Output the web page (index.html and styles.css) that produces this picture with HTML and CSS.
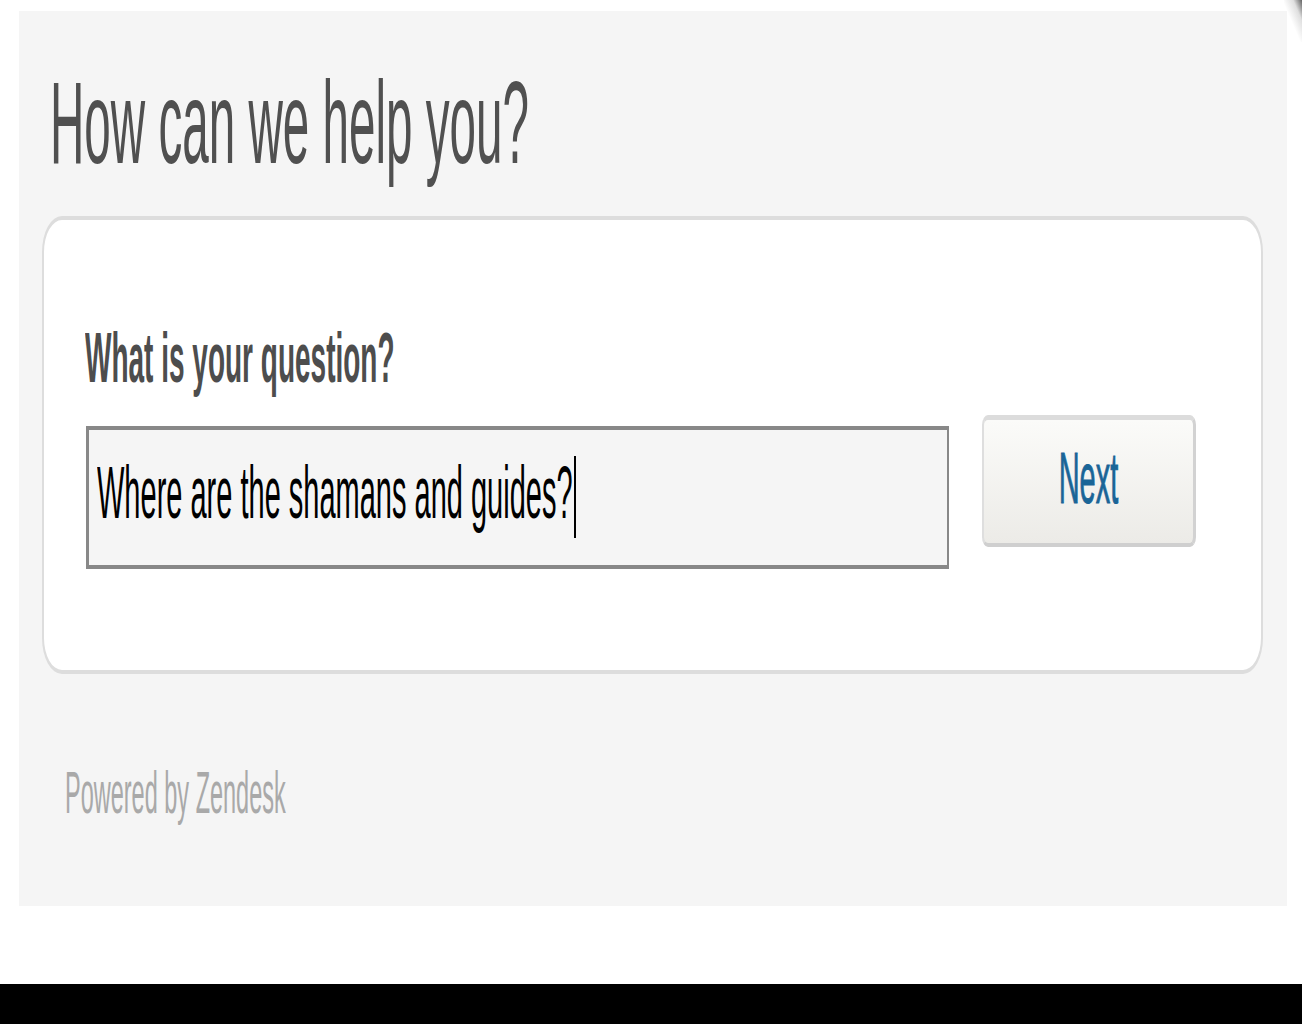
FILE: index.html
```html
<!DOCTYPE html>
<html lang="en">
<head>
    <meta charset="UTF-8" />
    <title>How can we help you?</title>
    <link rel="stylesheet" href="styles.css">
</head>
<body>
    <div class="corner-shadow"></div>
    <div class="panel">
        <h1 class="title"><span class="tall">How can we help you?</span></h1>
        <div class="card">
            <label class="question-label" for="question"><span class="tall">What is your question?</span></label>
            <div class="question-row">
                <div class="field" id="question">
                    <span class="tall field-text">Where are the shamans and guides?</span>
                    <span class="caret"></span>
                </div>
                <button class="next-btn"><span class="tall">Next</span></button>
            </div>
        </div>
        <div class="powered"><span class="tall">Powered by Zendesk</span></div>
    </div>
    <div class="bottom-bar"></div>
</body>
</html>
```

FILE: styles.css
```css
body {
    font-family: "Liberation Sans", Arial, sans-serif;
    margin: 0;
    padding: 0;
    background: #fff;
    width: 1302px;
    height: 1024px;
    overflow: hidden;
    position: relative;
}

/* text in this shot is stretched tall, so every label is scaled */
.tall {
    display: inline-block;
    white-space: nowrap;
    transform: scaleY(2.5);
    transform-origin: 0 0;
}

.corner-shadow {
    position: absolute;
    top: 0;
    right: 0;
    width: 18px;
    height: 42px;
    background: linear-gradient(to bottom left, rgba(60, 60, 60, 0.8) 0%, rgba(150, 150, 150, 0.3) 25%, rgba(255, 255, 255, 0) 55%);
    border-bottom-left-radius: 18px 42px;
}

.panel {
    box-sizing: border-box;
    width: 1268px;
    height: 895px;
    margin: 11px 0 0 19px;
    padding: 53px 24px 0 23px;
    background: #f5f5f5;
}

.title {
    margin: 0 0 32px 8px;
    height: 120px;
    font-weight: normal;
    color: #505050;
}

    .title .tall {
        font-size: 47.6px;
        line-height: 48px;
        transform: scaleY(2.47);
    }

.card {
    background: #fff;
    border-style: solid;
    border-color: #dddddd;
    border-width: 4px 2px 4px 2px;
    border-radius: 20px / 36px;
    padding: 102px 65px 101px 42px;
}

.question-label {
    display: block;
    height: 75px;
    margin: 0 0 18px -1px;
    color: #4d4d4d;
    font-weight: bold;
}

    .question-label .tall {
        font-size: 28px;
        line-height: 30px;
    }

.question-row {
    display: flex;
    align-items: flex-start;
    gap: 33px;
}

.field {
    box-sizing: border-box;
    flex: 1;
    height: 143px;
    margin-top: 11px;
    padding: 24px 8px 0 8px;
    display: flex;
    align-items: flex-start;
    background: #f5f5f5;
    border-style: solid;
    border-color: #888;
    border-width: 4px 2px 4px 3px;
}

.field-text {
    font-size: 29px;
    line-height: 30px;
    color: #000;
    transform: scaleY(2.55);
}

.caret {
    width: 2px;
    height: 82px;
    margin: 2px 0 0 1px;
    background: #000;
}

.next-btn {
    box-sizing: border-box;
    width: 214px;
    height: 132px;
    padding: 20px 0 0 0;
    text-align: center;
    font-family: inherit;
    color: #1a6597;
    background: linear-gradient(#fbfbf9, #ecebe7);
    border-style: solid;
    border-color: #dcdcdc #d2d2d2 #cfcfcf #dedede;
    border-width: 5px 3px 4px 2px;
    border-radius: 6px / 10px;
    display: flex;
    justify-content: center;
    align-items: flex-start;
}

    .next-btn .tall {
        font-size: 29px;
        line-height: 30px;
        -webkit-text-stroke: 0.4px #1a6597;
    }

.powered {
    height: 60px;
    margin: 89px 0 0 23px;
    color: #a9a9a9;
}

    .powered .tall {
        font-size: 23.5px;
        line-height: 24px;
    }

.bottom-bar {
    height: 40px;
    margin-top: 78px;
    background: #000;
}
```
